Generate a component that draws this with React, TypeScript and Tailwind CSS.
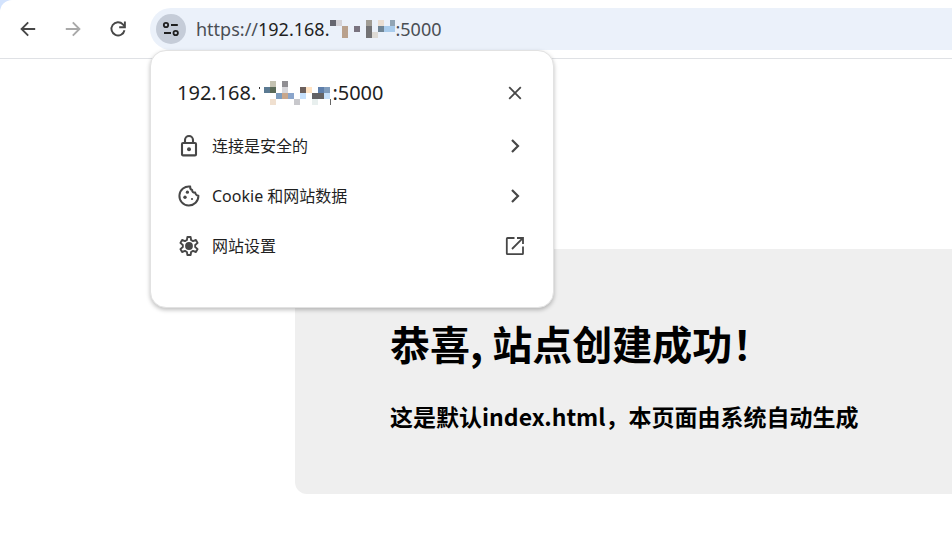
import React, { useState } from 'react';

type Cell = [x: number, y: number, w: number, h: number, color: string];

const urlCells: Cell[] = [
  [1, 0, 6, 6, '#66666f'],
  [7, 0, 6, 6, '#d5d3d7'],
  [13, 6, 6, 12, '#b9a18d'],
  [25, 6, 6, 6, '#79737f'],
  [37, 0, 6, 6, '#a19d95'],
  [37, 6, 6, 12, '#737375'],
  [43, 12, 6, 6, '#dddad5'],
  [49, 0, 6, 6, '#e9ddd1'],
  [49, 6, 6, 6, '#708595'],
  [55, 6, 12, 6, '#a9ccec'],
  [61, 0, 6, 6, '#90a4b4'],
];

const titleCells: Cell[] = [
  [3, 6, 1, 2, '#333333'],
  [14, 0, 6, 6, '#c4c2b2'],
  [26, 0, 6, 6, '#8f8e92'],
  [8, 6, 6, 6, '#5b7a92'],
  [14, 6, 6, 6, '#5a6a58'],
  [26, 6, 6, 6, '#d6d6da'],
  [44, 6, 6, 6, '#6b5f5c'],
  [50, 6, 6, 6, '#ffe3c4'],
  [62, 6, 6, 6, '#5f7fab'],
  [68, 6, 6, 6, '#819dbd'],
  [20, 12, 6, 6, '#7c9cbe'],
  [26, 12, 6, 6, '#c8a78c'],
  [32, 12, 6, 6, '#8ba5cb'],
  [44, 12, 6, 6, '#c6e0fb'],
  [56, 12, 12, 6, '#646264'],
  [68, 12, 6, 6, '#c6e0fb'],
  [14, 18, 6, 6, '#f0e0d0'],
  [38, 18, 6, 6, '#c8c8cc'],
  [56, 18, 6, 6, '#e8efee'],
  [74, 18, 1, 6, '#666666'],
];

function Mosaic({ cells, className }: { cells: Cell[]; className: string }) {
  return (
    <svg className={className} shapeRendering="crispEdges" aria-hidden="true">
      {cells.map(([x, y, w, h, color]) => (
        <rect key={`${x}-${y}`} x={x} y={y} width={w} height={h} fill={color} />
      ))}
    </svg>
  );
}

function Icon({ children, width = 2 }: { children: React.ReactNode; width?: number }) {
  return (
    <svg viewBox="0 0 24 24" className="size-6 shrink-0" fill="none" stroke="currentColor" strokeWidth={width} aria-hidden="true">
      {children}
    </svg>
  );
}

const BackIcon = () => (
  <Icon width={1.9}>
    <path d="M19.2 12H6M12.2 5.4 5.6 12l6.6 6.6" />
  </Icon>
);

const ForwardIcon = () => (
  <Icon width={1.9}>
    <path d="M4.8 12H18M11.8 5.4l6.6 6.6-6.6 6.6" />
  </Icon>
);

const ReloadIcon = () => (
  <Icon width={1.9}>
    <path d="M18.5 13.2A6.6 6.6 0 1 1 16.9 7.4L18.6 9.3" />
    <path d="M18.9 4.6v5.7h-5.7" />
  </Icon>
);

const TuneIcon = () => (
  <Icon width={1.8}>
    <circle cx="7" cy="8" r="2.2" />
    <path d="M12 8h6.8M5 16h7" />
    <circle cx="16.7" cy="16" r="2.2" />
  </Icon>
);

const LockIcon = () => (
  <Icon width={2.1}>
    <rect x="5" y="9" width="14" height="12.4" rx="1" />
    <path d="M8 9V6a4 4 0 0 1 8 0v3" />
    <circle cx="12" cy="15.2" r="2" fill="currentColor" stroke="none" />
  </Icon>
);

const CookieIcon = () => (
  <Icon>
    <path strokeLinejoin="round" d="M13.2 2.6A9.5 9.5 0 1 0 21.4 11.8C19.6 11.5 18.4 10.3 18.2 8.5 16 8.6 15 7.6 15.2 6 13.6 5.6 13 4.3 13.2 2.6Z" />
    <g fill="currentColor" stroke="none">
      <circle cx="10.4" cy="8.2" r="1.6" />
      <circle cx="8" cy="13.2" r="1.7" />
      <circle cx="15" cy="15" r="1.1" />
    </g>
  </Icon>
);

const GearIcon = () => (
  <Icon width={1.9}>
    <path
      strokeLinejoin="round"
      d="M10.4 3h3.2l.5 3 1.9 1.1 2.9-1.1 1.7 2.9-2.4 2.1v2l2.400 2.100-1.700 2.900-2.900-1.100-1.900 1.100-.5 3h-3.200l-.5-3L8 16.900 5.100 18l-1.700-2.900L5.800 13v-2L3.400 8.900 5.100 6 8 7.100 9.900 6Z"
    />
    <circle cx="12" cy="12" r="3.9" fill="currentColor" stroke="none" />
  </Icon>
);

const CloseIcon = () => (
  <Icon width={1.8}>
    <path d="m6.200 6.200 11.600 11.600M17.800 6.200 6.200 17.800" />
  </Icon>
);

const ChevronIcon = () => (
  <Icon width={2.2}>
    <path d="m9 6 6 6-6 6" />
  </Icon>
);

const OpenIcon = () => (
  <Icon width={1.8}>
    <path d="M11.500 4H4.500a.7.7 0 0 0-.7.7v14.800a.7.7 0 0 0 .7.7h14.800a.7.7 0 0 0 .7-.7V12.500" />
    <path d="M14 4h6v6M19.800 4.200 9 15" />
  </Icon>
);

const items = [
  { id: 'secure', label: '连接是安全的', icon: LockIcon, end: ChevronIcon },
  { id: 'cookies', label: 'Cookie 和网站数据', icon: CookieIcon, end: ChevronIcon },
  { id: 'settings', label: '网站设置', icon: GearIcon, end: OpenIcon },
];

function SiteInfo({ onClose }: { onClose: () => void }) {
  return (
    <div
      role="dialog"
      aria-labelledby="site-title"
      className="absolute left-0 top-full z-10 w-[404px] rounded-2xl border border-[#e2e2e2] bg-white pt-6 pb-9 shadow-[0_2px_4px_rgba(0,0,0,0.25)]"
    >
      <div className="flex h-9 items-center justify-between px-[26px]">
        <h2 id="site-title" className="flex items-center text-xl">
          <span>192.168.</span>
          <Mosaic cells={titleCells} className="h-6 w-[76px]" />
          <span>:5000</span>
        </h2>
        <button onClick={onClose} aria-label="关闭" className="text-[#474747]">
          <CloseIcon />
        </button>
      </div>
      <ul className="mt-2.5">
        {items.map((item) => (
          <li key={item.id}>
            <button className="flex h-[50px] w-full items-center gap-[11px] px-[26px] text-left text-base">
              <span className="text-[#474747]"><item.icon /></span>
              <span className="flex-1">{item.label}</span>
              <span className="text-[#474747]"><item.end /></span>
            </button>
          </li>
        ))}
      </ul>
    </div>
  );
}

export default function App() {
  const [open, setOpen] = useState(true);

  return (
    <div className="min-h-screen overflow-x-hidden bg-white font-['Noto_Sans','Noto_Sans_CJK_SC',sans-serif] text-[#1f1f1f]">
      <header className="bg-[#d3e3fd]">
        <div className="flex items-center rounded-tl-xl border-b border-[#dfe1e5] bg-white py-2">
          <nav className="flex items-center gap-[21px] px-4 pr-5 text-[#474747]">
            <button aria-label="后退"><BackIcon /></button>
            <button aria-label="前进" disabled className="text-[#a9a9a9]"><ForwardIcon /></button>
            <button aria-label="重新加载"><ReloadIcon /></button>
          </nav>
          <div className="relative flex h-[42px] flex-1 items-center gap-2.5 rounded-l-full bg-[#ebf1fa] pl-1.5">
            <button
              aria-label="查看网站信息"
              aria-expanded={open}
              onClick={() => setOpen(!open)}
              className="flex size-[30px] items-center justify-center rounded-full bg-[#c5ccd8]"
            >
              <TuneIcon />
            </button>
            <div role="textbox" aria-label="地址" className="flex items-center text-lg text-[#4a4e54]">
              <span>https://</span>
              <span className="text-[#1f1f1f]">192.168.</span>
              <Mosaic cells={urlCells} className="h-[18px] w-[66px]" />
              <span>:5000</span>
            </div>
            {open && <SiteInfo onClose={() => setOpen(false)} />}
          </div>
        </div>
      </header>

      <main className="ml-[31%] mt-[190px] rounded-l-xl bg-[#efefef] px-[95px] pt-16 pb-[61px] font-['Noto_Sans_CJK_SC',sans-serif] font-bold text-black">
        <h1 className="whitespace-nowrap text-[40px] leading-[60px]">恭喜, 站点创建成功！</h1>
        <h3 className="mt-[26px] whitespace-nowrap text-[23px] leading-[34px]">这是默认index.html，本页面由系统自动生成</h3>
      </main>
    </div>
  );
}
